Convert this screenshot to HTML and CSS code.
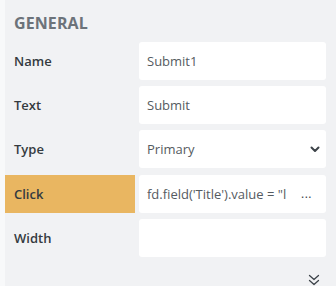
FILE: index.html
```html
<!DOCTYPE html>
<html>
<head>
<meta charset="utf-8">
<link rel="stylesheet" href="styles.css">
</head>
<body>
<div class="panel">
  <div class="title">GENERAL</div>
  <div class="rows">
    <div class="row">
      <div class="label">Name</div>
      <div class="field"><span class="val">Submit1</span></div>
    </div>
    <div class="row">
      <div class="label">Text</div>
      <div class="field"><span class="val">Submit</span></div>
    </div>
    <div class="row">
      <div class="label">Type</div>
      <div class="field"><span class="val">Primary</span>
        <svg class="chev" width="10" height="7" viewBox="0 0 10 7"><path d="M1.5 1.5 L5 5 L8.5 1.5" fill="none" stroke="#3d4349" stroke-width="2" stroke-linecap="round" stroke-linejoin="round"/></svg>
      </div>
    </div>
    <div class="row">
      <div class="label hl">Click</div>
      <div class="field"><span class="val code">fd.field('Title').value = "l</span><span class="dots">...</span></div>
    </div>
    <div class="row">
      <div class="label">Width</div>
      <div class="field"><span class="val"></span></div>
    </div>
  </div>
  <div class="more">
    <svg width="12" height="12" viewBox="0 0 12 12"><path d="M1.5 1.5 L6 5.5 L10.5 1.5 M1.5 6.5 L6 10.5 L10.5 6.5" fill="none" stroke="#3d4349" stroke-width="1.3" stroke-linecap="round" stroke-linejoin="round"/></svg>
  </div>
</div>
</body>
</html>
```

FILE: styles.css
```css
html, body {
  margin: 0;
  padding: 0;
  background: #f8f9fa;
  font-family: "Open Sans", "Noto Sans", sans-serif;
}
.panel {
  margin-left: 5px;
  height: 286px;
  background: #f1f2f4;
  padding: 12px 10px 0 0;
  box-sizing: border-box;
  display: flex;
  flex-direction: column;
}
.title {
  padding-left: 9px;
  font-size: 16px;
  font-weight: 700;
  color: #6c737a;
  line-height: 22px;
  height: 30px;
  letter-spacing: 0.1px;
}
.rows {
  display: flex;
  flex-direction: column;
  gap: 6.3px;
}
.row {
  display: grid;
  grid-template-columns: 130px 1fr;
  column-gap: 4px;
  height: 38px;
}
.label {
  display: flex;
  align-items: center;
  padding-left: 9px;
  font-size: 13px;
  font-weight: 600;
  color: #343a40;
}
.label.hl {
  background: #e9b661;
}
.field {
  background: #ffffff;
  border-radius: 3px;
  display: flex;
  align-items: center;
  padding: 0 8px;
  font-size: 13px;
  color: #555b61;
}
.val {
  flex: 1;
  white-space: nowrap;
  overflow: hidden;
}
.chev {
  margin-right: -2px;
}
.dots {
  margin-left: 8px;
  margin-right: 6px;
  color: #3d4349;
  font-size: 12px;
  letter-spacing: 0.5px;
}
.more {
  display: flex;
  justify-content: flex-end;
  padding: 17px 6px 0 0;
}
```
